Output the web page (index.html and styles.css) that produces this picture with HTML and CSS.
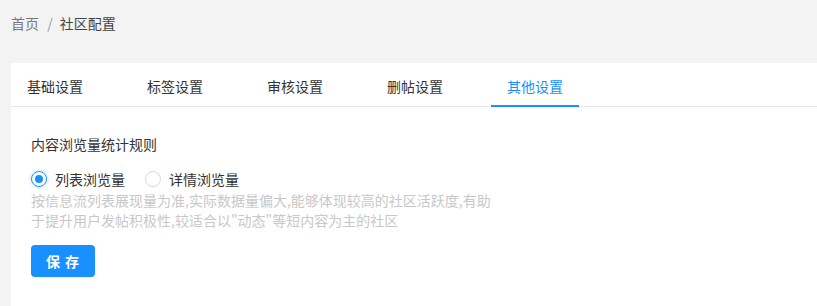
FILE: index.html
```html
<!DOCTYPE html>
<html lang="zh-CN">
<head>
    <meta charset="UTF-8">
    <meta name="viewport" content="width=device-width, initial-scale=1.0">
    <title>社区配置</title>
    <link rel="stylesheet" href="styles.css">
</head>
<body>
<div class="page">
    <div class="breadcrumb">
        <span class="crumb-link">首页</span>
        <span class="crumb-sep">/</span>
        <span class="crumb-current">社区配置</span>
    </div>

    <div class="card">
        <div class="tabs">
            <div class="tab">基础设置</div>
            <div class="tab">标签设置</div>
            <div class="tab">审核设置</div>
            <div class="tab">删帖设置</div>
            <div class="tab tab-active">其他设置</div>
        </div>

        <div class="content">
            <div class="field-title">内容浏览量统计规则</div>
            <div class="radio-group">
                <label class="radio radio-checked">
                    <span class="radio-circle"></span>
                    <span class="radio-label">列表浏览量</span>
                </label>
                <label class="radio">
                    <span class="radio-circle"></span>
                    <span class="radio-label">详情浏览量</span>
                </label>
            </div>
            <div class="hint">按信息流列表展现量为准,实际数据量偏大,能够体现较高的社区活跃度,有助于提升用户发帖积极性,较适合以"动态"等短内容为主的社区</div>
            <button class="btn btn-primary">保 存</button>
        </div>
    </div>
</div>
</body>
</html>
```

FILE: styles.css
```css
body {
    margin: 0;
    background-color: #f3f3f3;
    font-family: "Noto Sans CJK SC", "Noto Sans", sans-serif;
    font-size: 14px;
    color: #333;
}

.page {
    padding: 12px 0 0 11px;
}

.breadcrumb {
    line-height: 22px;
    color: #777;
}

.crumb-sep {
    margin: 0 4px 0 5px;
    color: #999;
}

.crumb-current {
    color: #444;
}

.card {
    margin-top: 29px;
    background-color: #fff;
    min-height: 243px;
}

.tabs {
    display: flex;
    gap: 32px;
    border-bottom: 1px solid #e8e8e8;
}

.tab {
    position: relative;
    padding: 13px 16px 10px;
    line-height: 20px;
    color: #333;
}

.tab-active {
    color: #1890ff;
}

.tab-active::after {
    content: "";
    position: absolute;
    left: 0;
    right: 0;
    bottom: -1px;
    height: 2px;
    background-color: #1890ff;
}

.content {
    padding: 26px 20px 20px;
}

.field-title {
    line-height: 22px;
    color: #333;
}

.radio-group {
    display: flex;
    margin-top: 13px;
    line-height: 22px;
}

.radio {
    display: flex;
    align-items: center;
    margin-right: 12px;
}

.radio-circle {
    box-sizing: border-box;
    width: 16px;
    height: 16px;
    border: 1px solid #d9d9d9;
    border-radius: 50%;
    position: relative;
}

.radio-checked .radio-circle {
    border-color: #1890ff;
    box-shadow: 0 0 0 2px #e6f4ff;
}

.radio-checked .radio-circle::after {
    content: "";
    position: absolute;
    left: 3px;
    top: 3px;
    width: 8px;
    height: 8px;
    border-radius: 50%;
    background-color: #1890ff;
}

.radio-label {
    padding: 0 8px;
    color: #333;
}

.hint {
    width: 466px;
    line-height: 20px;
    color: #c8c8c8;
}

.btn {
    margin-top: 15px;
    width: 64px;
    height: 32px;
    border: none;
    border-radius: 4px;
    font-family: inherit;
    font-size: 14px;
    font-weight: bold;
    letter-spacing: 1px;
    cursor: pointer;
}

.btn-primary {
    background-color: #1890ff;
    color: #fff;
}
```
